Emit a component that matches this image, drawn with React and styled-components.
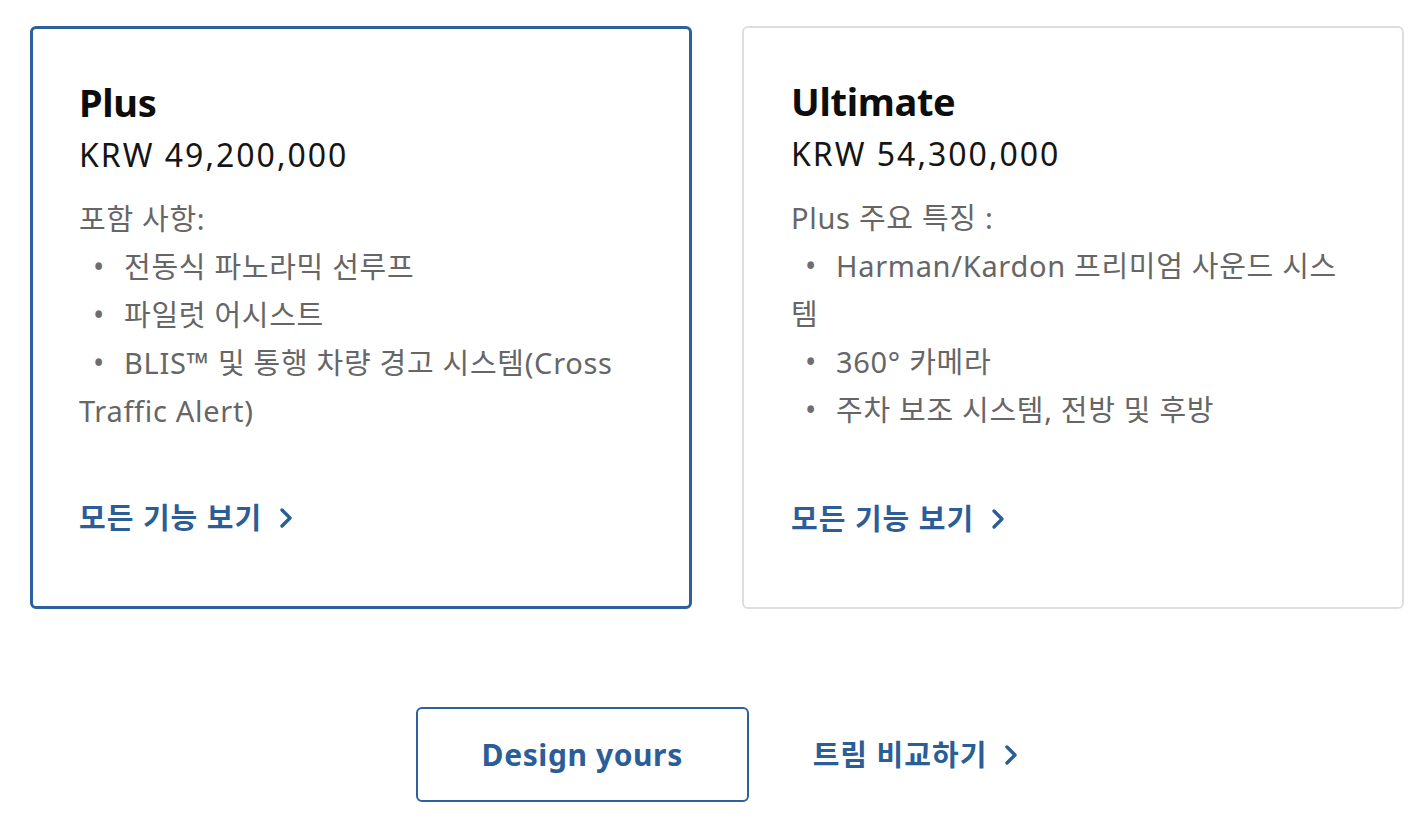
import React from 'react';
import styled, { createGlobalStyle } from 'styled-components';

const GlobalStyle = createGlobalStyle`
  html, body {
    margin: 0;
    padding: 0;
    background: #ffffff;
  }
  body {
    font-family: 'Noto Sans', 'Noto Sans CJK KR', sans-serif;
    -webkit-font-smoothing: antialiased;
  }
`;

const Page = styled.main`
  padding: 26px 18px 30px 30px;
`;

const Cards = styled.div`
  display: grid;
  grid-template-columns: 662px 662px;
  column-gap: 50px;
`;

const Card = styled.section`
  display: flex;
  flex-direction: column;
  box-sizing: border-box;
  min-height: 583px;
  padding: 48px 52px 68px ${(p) => (p.selected ? '46px' : '47px')};
  border: ${(p) => (p.selected ? '3px solid #2d619c' : '2px solid #dedede')};
  border-radius: 6px;
  background: #fff;
`;

const Name = styled.h2`
  margin: 0;
  font-size: 38px;
  font-weight: 700;
  line-height: 50px;
  color: #0d0d0d;
  letter-spacing: -0.3px;
`;

const Price = styled.p`
  margin: 2px 0 0 0;
  font-size: 32px;
  font-weight: 400;
  line-height: 52px;
  letter-spacing: 2px;
  color: #151515;
`;

const Features = styled.div`
  margin-top: 14px;
  font-size: 29px;
  line-height: 48px;
  letter-spacing: 0.7px;
  color: #666666;
`;

const Line = styled.div``;

const Bullet = styled.span`
  display: inline-block;
  margin-left: 14px;
  width: 31px;
  font-size: 30px;
  color: #6e6e6e;
`;

const MoreLink = styled.a`
  display: inline-flex;
  align-items: center;
  gap: 17px;
  margin-top: ${(p) => (p.pushDown ? 'auto' : '0')};
  font-size: 29px;
  font-weight: 600;
  line-height: 40px;
  letter-spacing: 1px;
  color: #2b5d97;
  text-decoration: none;
  cursor: pointer;
`;

const Actions = styled.div`
  display: flex;
  justify-content: center;
  align-items: center;
  gap: 64px;
  margin-top: 98px;
`;

const DesignButton = styled.button`
  width: 333px;
  height: 95px;
  border: 2px solid #2d619c;
  border-radius: 6px;
  background: #fff;
  font-family: 'Noto Sans', sans-serif;
  font-size: 30px;
  font-weight: 700;
  letter-spacing: 0.6px;
  color: #2b5d97;
  cursor: pointer;
`;

const Chevron = () => (
  <svg width="14" height="22" viewBox="0 0 14 22" aria-hidden="true">
    <polyline points="3,3 11,11 3,19" fill="none" stroke="#2b5d97" strokeWidth="3.4" strokeLinecap="round" strokeLinejoin="round" />
  </svg>
);

const trims = [
  {
    name: 'Plus',
    price: 'KRW 49,200,000',
    intro: '포함 사항:',
    items: ['전동식 파노라믹 선루프', '파일럿 어시스트', 'BLIS™ 및 통행 차량 경고 시스템(Cross Traffic Alert)'],
    selected: true,
  },
  {
    name: 'Ultimate',
    price: 'KRW 54,300,000',
    intro: 'Plus 주요 특징 :',
    items: ['Harman/Kardon 프리미엄 사운드 시스템', '360° 카메라', '주차 보조 시스템, 전방 및 후방'],
    selected: false,
  },
];

export default function App() {
  return (
    <Page>
      <GlobalStyle />
      <Cards>
        {trims.map((t) => (
          <Card key={t.name} selected={t.selected}>
            <Name>{t.name}</Name>
            <Price>{t.price}</Price>
            <Features>
              <Line>{t.intro}</Line>
              {t.items.map((item) => (
                <Line key={item}>
                  <Bullet>•</Bullet>
                  {item}
                </Line>
              ))}
            </Features>
            <MoreLink pushDown>
              모든 기능 보기 <Chevron />
            </MoreLink>
          </Card>
        ))}
      </Cards>
      <Actions>
        <DesignButton>Design yours</DesignButton>
        <MoreLink>
          트림 비교하기 <Chevron />
        </MoreLink>
      </Actions>
    </Page>
  );
}
